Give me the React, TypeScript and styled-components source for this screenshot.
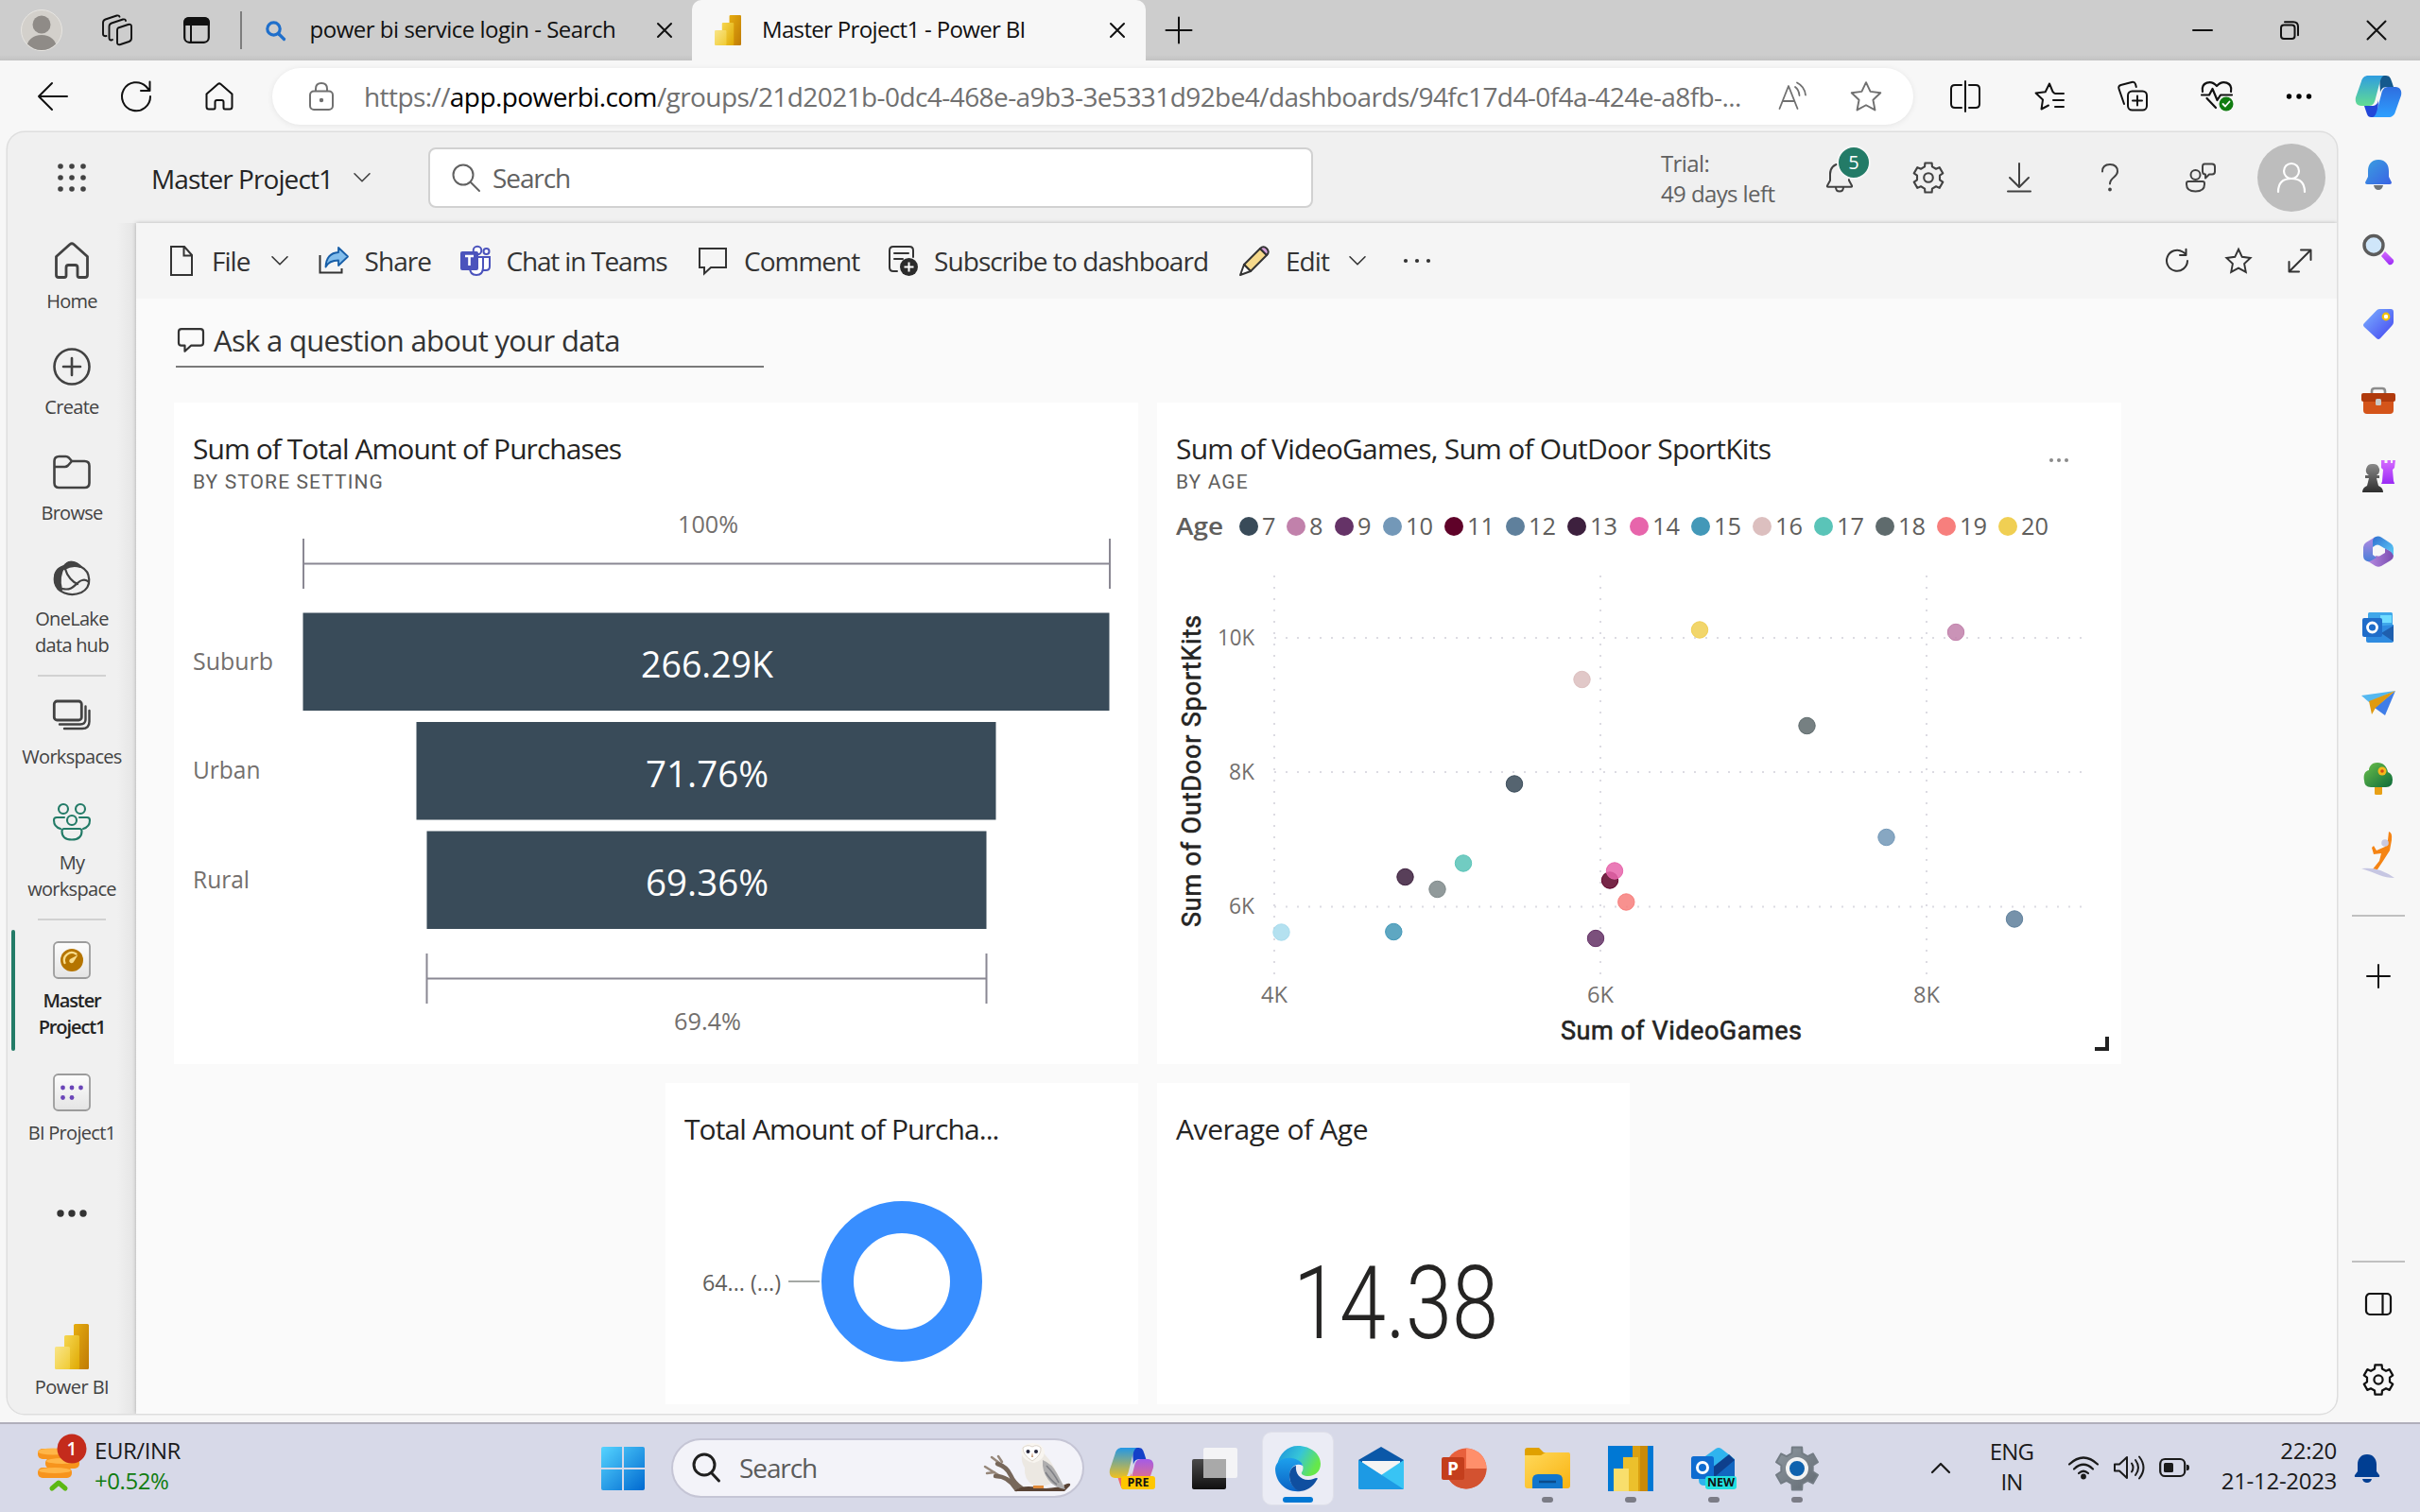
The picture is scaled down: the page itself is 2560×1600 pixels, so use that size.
import React from "react";
import styled, { createGlobalStyle, css } from "styled-components";

const UI = `"Open Sans", "Noto Sans", "Liberation Sans", sans-serif`;
const DIN = `Roboto, "Liberation Sans", sans-serif`;

const Global = createGlobalStyle`
  * { box-sizing: border-box; }
  html, body { margin: 0; padding: 0; background: #f7f7f7; }
  body { font-family: ${UI}; color: #242424; }
`;

/* ---------- shared pieces ---------- */

const Screen = styled.div`
  width: 2560px;
  height: 1600px;
  display: flex;
  flex-direction: column;
  overflow: hidden;
  background: #f7f7f7;
`;

const Svg = styled.svg<{ $w?: number; $h?: number; $ml?: number }>`
  display: block;
  flex: none;
  width: ${(p) => p.$w ?? 32}px;
  height: ${(p) => p.$h ?? p.$w ?? 32}px;
  margin-left: ${(p) => p.$ml ?? 0}px;
  overflow: visible;
`;

const Line = styled(Svg)<{ $sw?: number; $miter?: boolean }>`
  fill: none;
  stroke: currentColor;
  stroke-width: ${(p) => p.$sw ?? 2};
  stroke-linecap: ${(p) => (p.$miter ? "butt" : "round")};
  stroke-linejoin: ${(p) => (p.$miter ? "miter" : "round")};
`;

const Text = styled.span<{ $size: number; $ls?: number; $ml?: number; $w?: number }>`
  flex: none;
  white-space: nowrap;
  font-size: ${(p) => p.$size}px;
  letter-spacing: ${(p) => p.$ls ?? 0}px;
  margin-left: ${(p) => p.$ml ?? 0}px;
  ${(p) => p.$w !== undefined && css`width: ${p.$w}px;`}
`;

function gearPath(c: number, R: number, r: number) {
  const pts: string[] = [];
  for (let i = 0; i < 6; i++) {
    const a = -90 + i * 60;
    [[-19, r], [-13, R], [13, R], [19, r]].forEach(([d, q]) => {
      const t = ((a + d) * Math.PI) / 180;
      pts.push(`${(c + q * Math.cos(t)).toFixed(2)} ${(c + q * Math.sin(t)).toFixed(2)}`);
    });
  }
  return `M${pts.join("L")}Z`;
}

const STAR = "M16 2 L20.3 11.2 L30.4 12.5 L23 19.5 L24.9 29.6 L16 24.7 L7.1 29.6 L9 19.5 L1.6 12.5 L11.7 11.2Z";

const Chevron = () => (
  <Line $w={16} $h={10} $sw={1.6} viewBox="0 0 16 10"><path d="M0 .8l8 8 8-8" /></Line>
);

const PowerBars = ({ w, h, id }: { w: number; h: number; id: string }) => (
  <Svg $w={w} $h={h} viewBox="0 0 36 48" preserveAspectRatio="none">
    <defs>
      <linearGradient id={id + "a"} x1="0" y1="0" x2="1" y2="1"><stop offset="0" stopColor="#e6ad10" /><stop offset="1" stopColor="#bf7a05" /></linearGradient>
      <linearGradient id={id + "b"} x1="0" y1="0" x2="1" y2="1"><stop offset="0" stopColor="#f6d751" /><stop offset="1" stopColor="#dfa903" /></linearGradient>
      <linearGradient id={id + "c"} x1="0" y1="0" x2="1" y2="1"><stop offset="0" stopColor="#f9e589" /><stop offset="1" stopColor="#f0cb33" /></linearGradient>
    </defs>
    <rect x="20" y="0" width="16" height="48" rx="1.5" fill={`url(#${id}a)`} />
    <rect x="10" y="12" width="16" height="36" rx="1.5" fill={`url(#${id}b)`} />
    <rect x="0" y="24" width="16" height="24" rx="1.5" fill={`url(#${id}c)`} />
  </Svg>
);

const CopilotMark = ({ w, h, id, colors }: { w: number; h: number; id: string; colors: string[] }) => (
  <Svg $w={w} $h={h} viewBox="0 0 48 44" preserveAspectRatio="none">
    <defs>
      <linearGradient id={id + "a"} x1="0" y1="0" x2="0" y2="1"><stop offset="0" stopColor={colors[0]} /><stop offset="1" stopColor={colors[1]} /></linearGradient>
      <linearGradient id={id + "b"} x1="0" y1="0" x2="0" y2="1"><stop offset="0" stopColor={colors[2]} /><stop offset="1" stopColor={colors[3]} /></linearGradient>
    </defs>
    <path d="M25 0h7c4 0 5 3 6 6l2 6h-7c-4 0-6 2-7 6z" fill={colors[4]} />
    <path d="M23 44h-7c-3 0-4-3-5-6l-2-6h8c4 0 6-2 7-6z" fill={colors[5]} />
    <path d="M13 0h17c-3 1-4 5-5 9l-4 15c-1 5-3 8-7 8H6c-5 0-7-4-6-9L6 6c1-4 4-6 7-6z" fill={`url(#${id}a)`} />
    <path d="M35 44H18c3-1 4-5 5-9l4-15c1-5 3-8 7-8h8c5 0 7 4 6 9l-6 17c-1 4-4 6-7 6z" fill={`url(#${id}b)`} />
  </Svg>
);

/* ---------- browser title bar ---------- */

const TitleBar = styled.div`
  height: 64px;
  flex: none;
  display: flex;
  align-items: center;
  padding: 0 36px 0 22px;
  background: linear-gradient(#cdcdcd 58px, #c2c2c2);
  color: #111;
`;
const Profile = styled.div`
  width: 44px;
  height: 44px;
  border-radius: 50%;
  overflow: hidden;
  background: #d3d0cb;
  border: 1px solid #e8e6e2;
`;
const TabDivider = styled.div`
  width: 2px;
  height: 40px;
  margin: -1px 0 0 32px;
  background: #7d7d7d;
`;
const Tab = styled.div<{ $w: number; $active?: boolean }>`
  width: ${(p) => p.$w}px;
  height: 64px;
  display: flex;
  align-items: center;
  padding: 0 21px 0 25px;
  ${(p) => p.$active && css`
    background: #f7f7f7;
    border-radius: 10px 10px 0 0;
    padding: 0 22px 0 24px;
  `}
`;
const TabTitle = styled(Text)`
  padding-bottom: 3px;
`;
const Spacer = styled.div`flex: 1;`;
const WindowButtons = styled.div`
  display: flex;
  align-items: center;
  gap: 72px;
`;

const CloseX = () => <Line $w={16} viewBox="0 0 16 16"><path d="M1 1l14 14M15 1L1 15" /></Line>;

const TitleBarView = () => (
  <TitleBar>
    <Profile>
      <Svg $w={42} viewBox="0 0 42 42"><circle cx="21" cy="15" r="9.5" fill="#8f8b87" /><path d="M5 42c0-11 7-16 16-16s16 5 16 16z" fill="#8f8b87" /></Svg>
    </Profile>
    <Line $ml={42} $sw={1.9} viewBox="0 0 32 32">
      <path d="M17 13.500l10.500-3.500q3.500-1 3.500 2v12.500q0 2.500-2.500 3.500l-9 3q-3.500 1-3.500-2V16q0-1.800 1-2.500z" />
      <path d="M11 26l-.5.300q-3 .7-3-2V12q0-2.500 2.500-3.500l12-4q2.500-.7 3 1.500" />
      <path d="M4.500 22l-.5.200q-3 0-3-2V8q0-2.500 2.500-3.500l12-4q2.500-.6 3 1.200" />
    </Line>
    <Line $w={28} $ml={54} viewBox="0 0 28 28">
      <rect x="1.200" y="1.200" width="25.600" height="25.600" rx="5" strokeWidth="2.200" />
      <path d="M1 8V6q0-5 5-5h16q5 0 5 5v2z" fill="#111" /><path d="M8 9v17" />
    </Line>
    <TabDivider />
    <Tab $w={476}>
      <Svg $w={21} viewBox="0 0 21 21" fill="none" stroke="#1f6fcb" strokeWidth="3.200" strokeLinecap="round"><circle cx="8.500" cy="8.500" r="6.700" /><path d="M14 14l5.500 5.500" /></Svg>
      <TabTitle $size={24} $ls={-0.48} $ml={25.5}>power bi service login - Search</TabTitle>
      <Spacer />
      <CloseX />
    </Tab>
    <Tab $w={480} $active>
      <PowerBars w={28} h={32} id="tab" />
      <TabTitle $size={24} $ls={-0.66} $ml={22}>Master Project1 - Power BI</TabTitle>
      <Spacer />
      <CloseX />
    </Tab>
    <Line $w={28} $ml={21} viewBox="0 0 28 28"><path d="M14 .5v27M.5 14h27" /></Line>
    <Spacer />
    <WindowButtons>
      <Line $w={20} viewBox="0 0 20 20"><path d="M0 10h20" /></Line>
      <Line $w={20} viewBox="0 0 20 20"><rect x="1" y="4.500" width="14.500" height="14.500" rx="3" /><path d="M5 1.200h9q5 0 5 5v9" /></Line>
      <Line $w={20} viewBox="0 0 20 20"><path d="M.5.5l19 19M19.500.5l-19 19" /></Line>
    </WindowButtons>
  </TitleBar>
);

/* ---------- address row ---------- */

const AddressRow = styled.div`
  height: 76px;
  flex: none;
  display: flex;
  align-items: center;
  padding: 0 20px 0 40px;
  color: #111;
`;
const UrlPill = styled.div`
  width: 1736px;
  height: 60px;
  margin-left: 41px;
  padding: 0 33px 0 39px;
  display: flex;
  align-items: center;
  border-radius: 30px;
  background: #fff;
  color: #707070;
  box-shadow: 0 1px 6px rgba(0, 0, 0, 0.08);
`;
const Url = styled(Text)`
  padding-bottom: 1px;
`;
const Host = styled.b`
  font-weight: 400;
  color: #000;
`;

const AddressRowView = () => (
  <AddressRow>
    <Line viewBox="0 0 32 32"><path d="M1 16h30M15 2L1 16l14 14" /></Line>
    <Line $w={34} $ml={55} viewBox="0 0 34 34"><path d="M32 17A15 15 0 1 1 27.500 6.500l3.500 4M31.500 1.500v9.500h-9.500" /></Line>
    <Line $w={30} $ml={56} viewBox="0 0 30 30"><path d="M1.500 12.500L13.500 2q1.500-1.200 3 0l12 10.500V26q0 2.500-2.500 2.500h-5q-1.500 0-1.500-1.500v-6q0-2-2-2h-5q-2 0-2 2v6q0 1.500-1.500 1.500H4q-2.500 0-2.500-2.500z" /></Line>
    <UrlPill>
      <Line $w={26} $h={30} viewBox="0 0 26 30"><rect x="1" y="9.500" width="24" height="19.500" rx="4" /><path d="M7 9V7q0-6 6-6t6 6v2" /><circle cx="13" cy="19" r="1.200" fill="currentColor" /></Line>
      <Url $size={28} $ls={-0.58} $ml={32}>https://<Host>app.powerbi.com</Host>/groups/21d2021b-0dc4-468e-a9b3-3e5331d92be4/dashboards/94fc17d4-0f4a-424e-a8fb-...</Url>
      <Spacer />
      <Line $w={32} $sw={1.8} viewBox="0 0 32 32"><path d="M1.500 29L11 5l9.500 24M5 21h12M18 6q4 3 4.500 9M20 1.500q8 4 9 13" /></Line>
      <Line $w={34} $ml={44} $sw={1.8} viewBox="0 0 32 32"><path d={STAR} /></Line>
    </UrlPill>
    <Line $ml={39} viewBox="0 0 32 32"><path d="M16 0v32M12 4H5Q1 4 1 8v16q0 4 4 4h7M20 4h7q4 0 4 4v16q0 4-4 4h-7" /></Line>
    <Line $ml={57} viewBox="0 0 32 32"><path d="M21 12.500L19.500 11 16 2.500 11.700 11.200 1.600 12.500 9 19.500 7.500 29.500 15 25.500M22 13h9M20 20h11M22 27h9" /></Line>
    <Line $ml={56} viewBox="0 0 32 32"><rect x="11" y="10.500" width="20" height="20" rx="4.500" /><path d="M21 15.500v10M16 20.500h10M7 24L1.500 8q-1-3 2-4L15 1q3-.7 4 2l.8 3" /></Line>
    <Svg $w={34} $ml={56} viewBox="0 0 34 34" fill="none" stroke="#111" strokeWidth="2.200" strokeLinecap="round" strokeLinejoin="round">
      <path d="M2 12C0 2 11-1 17 6 23-1 34 2 32 12M6.500 19L16 29" /><path d="M1 15.500h8l3.500-6.500 5 12 3.500-5.500h12" />
      <circle cx="27" cy="25" r="7.500" fill="#107c10" stroke="none" /><path d="M23.500 25l2.500 2.500 4.500-5" stroke="#fff" strokeWidth="1.800" />
    </Svg>
    <Svg $w={28} $h={8} $ml={56} viewBox="0 0 28 8"><circle cx="3.500" cy="4" r="2.700" /><circle cx="14" cy="4" r="2.700" /><circle cx="24.500" cy="4" r="2.700" /></Svg>
    <Spacer />
    <CopilotMark w={48} h={44} id="edgecp" colors={["#2f9de0", "#62dc93", "#2e6ddf", "#2ea0ff", "#15598c", "#2247d8"]} />
  </AddressRow>
);

/* ---------- page frame ---------- */

const Body = styled.div`
  height: 1365px;
  flex: none;
  display: flex;
  align-items: flex-start;
  padding-left: 8px;
`;
const Frame = styled.div`
  width: 2464px;
  height: 1356px;
  flex: none;
  display: flex;
  flex-direction: column;
  overflow: hidden;
  border-radius: 18px;
  background: #f0f0f0;
  box-shadow: 0 0 0 1.500px #dedede;
`;
const PageHeader = styled.header`
  height: 96px;
  flex: none;
  display: flex;
  align-items: center;
  padding: 0 12px 0 56px;
  color: #424242;
`;
const WorkspaceName = styled(Text)`
  padding-top: 1px;
  color: #242424;
`;
const SearchBox = styled.div`
  width: 936px;
  height: 64px;
  margin-left: 62px;
  display: flex;
  align-items: center;
  padding-left: 23px;
  border: 2px solid #d1d1d1;
  border-radius: 8px;
  background: #fff;
  color: #616161;
`;
const Trial = styled.div`
  width: 174px;
  padding-top: 2px;
  font-size: 24px;
  line-height: 32px;
  letter-spacing: -0.6px;
  color: #616161;
`;
const BellWrap = styled.div`
  position: relative;
`;
const Badge = styled.div`
  position: absolute;
  left: 12px;
  top: -18px;
  width: 36px;
  height: 36px;
  border: 2px solid #f6f6f6;
  border-radius: 50%;
  background: #237b67;
  color: #fff;
  font-size: 20px;
  line-height: 32px;
  text-align: center;
`;
const UserCircle = styled.div`
  width: 72px;
  height: 72px;
  margin-left: 44px;
  border-radius: 50%;
  background: #bdbdbd;
  color: #fff;
  display: flex;
  align-items: center;
  justify-content: center;
`;

const HeaderView = () => (
  <PageHeader>
    <Svg $w={24} viewBox="0 0 24 24" fill="#424242">
      {[0, 12, 24].map((y) => [0, 12, 24].map((x) => <circle key={`${x}-${y}`} cx={x} cy={y} r="2.800" />))}
    </Svg>
    <WorkspaceName $size={28} $ls={-0.92} $ml={72} $w={215}>Master Project1</WorkspaceName>
    <Chevron />
    <SearchBox>
      <Line $w={30} viewBox="0 0 30 30"><circle cx="12" cy="12" r="10.500" /><path d="M20 20l9 9" /></Line>
      <Text $size={28} $ls={-1.1} $ml={13}>Search</Text>
    </SearchBox>
    <Spacer />
    <Trial>Trial:<br />49 days left</Trial>
    <BellWrap>
      <Line $w={30} $h={32} viewBox="0 0 30 32"><path d="M15 1.500C9 1.500 5 6 5 12v7l-3 5.500q-.5 1.200.8 1.200h24.400q1.300 0 .8-1.200L25 19v-7C25 6 21 1.500 15 1.500zM11 26q0 4.500 4 4.500t4-4.500" /></Line>
      <Badge>5</Badge>
    </BellWrap>
    <Line $w={34} $ml={62} viewBox="0 0 32 32"><path d={gearPath(16, 15, 11.5)} /><circle cx="16" cy="16" r="4.500" /></Line>
    <Line $w={24} $h={32} $ml={67} viewBox="0 0 24 32"><path d="M12 1v24M2 16l10 10 10-10M0 30.500h24" /></Line>
    <Line $w={18} $h={30} $ml={75} viewBox="0 0 18 30"><path d="M1 8.500Q1 1 9 1t8 7.500c0 6-8 6-8 13" /><circle cx="9" cy="27.500" r=".9" fill="currentColor" /></Line>
    <Line $ml={71} viewBox="0 0 32 32"><circle cx="10.500" cy="13" r="5" /><path d="M3 20h15q2 0 2 2v1q0 7.500-9.500 7.500T1 23v-1q0-2 2-2z" /><path d="M20 1.500h8q3 0 3 3v5q0 3-3 3h-3l-4 4v-4q-3 0-3-3v-5q0-3 2-3z" /></Line>
    <UserCircle><Line $w={32} $sw={2.2} viewBox="0 0 32 32"><circle cx="16" cy="9" r="8" /><path d="M2 31q0-14 14-14t14 14" /></Line></UserCircle>
  </PageHeader>
);

/* ---------- left navigation ---------- */

const Workspace = styled.div`
  flex: 1;
  display: flex;
  min-height: 0;
`;
const Nav = styled.nav`
  width: 136px;
  flex: none;
  display: flex;
  flex-direction: column;
  padding-bottom: 14px;
  background: linear-gradient(to right, #f0f0f0 116px, #e4e4e4);
`;
const NavItem = styled.div<{ $selected?: boolean }>`
  position: relative;
  display: flex;
  flex-direction: column;
  align-items: center;
  gap: 9px;
  padding: 20px 0 15px;
  color: #424242;
  text-align: center;
  font-size: 20px;
  line-height: 28px;
  letter-spacing: -0.7px;
  ${(p) => p.$selected && css`
    color: #242424;
    font-weight: 600;
    letter-spacing: -1.1px;
    &::before {
      content: "";
      position: absolute;
      left: 4px;
      top: 8px;
      width: 4px;
      height: 128px;
      border-radius: 2px;
      background: #237b67;
    }
  `}
`;
const IconBox = styled.div`
  width: 40px;
  height: 40px;
  display: flex;
  align-items: center;
  justify-content: center;
`;
const NavDivider = styled.div`
  width: 72px;
  height: 2px;
  margin: 2px auto;
  background: #d1d1d1;
`;
const More = styled.div`
  height: 112px;
  display: flex;
  align-items: center;
  justify-content: center;
`;
const BrandItem = styled.div`
  margin-top: auto;
  display: flex;
  flex-direction: column;
  align-items: center;
  gap: 5px;
  color: #424242;
  font-size: 20px;
  line-height: 28px;
  letter-spacing: -0.55px;
`;

const navIcons = {
  home: <Line $w={40} $sw={2.8} viewBox="0 0 40 40"><path d="M3.500 15.500L18 2.500q2-1.500 4 0l14.500 13V35q0 2.500-2.500 2.500h-6q-2 0-2-2V27q0-2.500-2.500-2.500h-7Q14 24.500 14 27v8.500q0 2-2 2H6Q3.500 37.500 3.500 35z" /></Line>,
  create: <Line $w={40} $sw={2.6} viewBox="0 0 40 40"><circle cx="20" cy="20" r="18.500" /><path d="M20 11v18M11 20h18" /></Line>,
  browse: <Line $w={40} $sw={2.6} viewBox="0 0 40 40"><path d="M1.500 8q0-5 5-5h7q2 0 3.500 1.500L20 8h13.500q5 0 5 5v18q0 5-5 5h-27q-5 0-5-5zM1.500 14h11q2 0 3.500-1.500L20 8" /></Line>,
  lake: <Line $w={40} $sw={2.2} viewBox="0 0 40 40"><path d="M12 7Q20-2 30 8c10 5 12 21 0 27-12 5-26 0-28-11-1-8 3-14 10-17z" /><path d="M12 7Q1 10 2 22q1 7 7 10-4-13 3-25zM12 7q6-9 17 1-8-3-17 2z" fill="currentColor" /><path d="M13 10c2 8 8 14 13 16M10 31c12 3 15-8 21-9 3-1 5 0 7 2" /></Line>,
  workspaces: <Line $w={40} $sw={2.4} viewBox="0 0 40 40"><rect x="1.300" y="4" width="29" height="20" rx="3" strokeWidth="2.800" /><path d="M7 28.500h22q5.500 0 5.500-5.500V9.500M12 33h19q7.500 0 7.500-7.500V14" /></Line>,
  mine: <Line $w={40} $sw={2.1} viewBox="0 0 40 40" color="#237b67"><circle cx="11" cy="6" r="5" /><circle cx="29" cy="6" r="5" /><circle cx="20" cy="18" r="5" /><path d="M12 15H4q-3 0-3 3 0 7 7 9M28 15h8q3 0 3 3 0 7-7 9M12 27h16q2.500 0 2.500 2.500 0 9-10.500 9T9.500 29.500Q9.500 27 12 27z" /></Line>,
  dash: <Svg $w={40} viewBox="0 0 40 40"><defs><linearGradient id="box" x1="0" y1="0" x2="0" y2="1"><stop offset="0" stopColor="#fdfdfd" /><stop offset="1" stopColor="#e4e4e4" /></linearGradient></defs><rect x="1" y="1" width="38" height="38" rx="4.500" fill="url(#box)" stroke="#9c9c9c" strokeWidth="1.800" /><circle cx="20" cy="20" r="12" fill="#b57500" /><path d="M12.500 23a8 8 0 0 1 12-9.500" fill="none" stroke="#f8dc8c" strokeWidth="2.200" strokeLinecap="round" /><path d="M26.500 14.500l-5 8q-2 1.500-3.500 0t0-3.500z" fill="#f8dc8c" /></Svg>,
  dots: <Svg $w={40} viewBox="0 0 40 40"><rect x="1" y="1" width="38" height="38" rx="4.500" fill="url(#box)" stroke="#9c9c9c" strokeWidth="1.800" /><g fill="#6b46b8"><circle cx="10.500" cy="15" r="2.400" /><circle cx="20" cy="15" r="2.400" /><circle cx="29.500" cy="15" r="2.400" /><circle cx="10.500" cy="25.500" r="2.400" /><circle cx="20" cy="25.500" r="2.400" /></g></Svg>,
};

const NavView = () => (
  <Nav>
    <NavItem><IconBox>{navIcons.home}</IconBox><span>Home</span></NavItem>
    <NavItem><IconBox>{navIcons.create}</IconBox><span>Create</span></NavItem>
    <NavItem><IconBox>{navIcons.browse}</IconBox><span>Browse</span></NavItem>
    <NavItem><IconBox>{navIcons.lake}</IconBox><span>OneLake<br />data hub</span></NavItem>
    <NavDivider />
    <NavItem><IconBox>{navIcons.workspaces}</IconBox><span>Workspaces</span></NavItem>
    <NavItem><IconBox>{navIcons.mine}</IconBox><span>My<br />workspace</span></NavItem>
    <NavDivider />
    <NavItem $selected><IconBox>{navIcons.dash}</IconBox><span>Master<br />Project1</span></NavItem>
    <NavItem><IconBox>{navIcons.dots}</IconBox><span>BI Project1</span></NavItem>
    <More><Svg $w={32} $h={8} viewBox="0 0 32 8" fill="#333"><circle cx="4" cy="4" r="3.700" /><circle cx="16" cy="4" r="3.700" /><circle cx="28" cy="4" r="3.700" /></Svg></More>
    <BrandItem><PowerBars w={36} h={48} id="brand" /><span>Power BI</span></BrandItem>
  </Nav>
);

/* ---------- dashboard toolbar ---------- */

const Main = styled.main`
  position: relative;
  flex: 1;
  min-width: 0;
  background: #fafafa;
  box-shadow: 0 0 4px rgba(0, 0, 0, 0.25);
`;
const Toolbar = styled.div`
  height: 80px;
  display: flex;
  align-items: center;
  gap: 33px;
  padding: 0 26px 0 32px;
  background: #f5f5f5;
  color: #333;
`;
const ToolItem = styled.div<{ $w: number; $ls?: number; $gap?: number }>`
  display: flex;
  align-items: center;
  gap: ${(p) => p.$gap ?? 17}px;
  font-size: 28px;
  white-space: nowrap;
  letter-spacing: ${(p) => p.$ls ?? -0.95}px;
  & > span { width: ${(p) => p.$w}px; }
`;
const MenuArrow = styled.div`margin-left: 5px;`;
const RightTools = styled.div`
  margin-left: auto;
  display: flex;
  align-items: center;
  gap: 38px;
`;

const ToolbarView = () => (
  <Toolbar>
    <ToolItem $w={42.5} $gap={16}>
      <Line $miter viewBox="0 0 32 32"><path d="M5 1h14l8 9v21H5zM18.500 1v9.500H27" /></Line>
      <span>File</span><MenuArrow><Chevron /></MenuArrow>
    </ToolItem>
    <ToolItem $w={68}>
      <Svg viewBox="0 0 32 32"><path d="M1.500 10v18.500h23V24" fill="none" stroke="#333" strokeWidth="2" /><path d="M21 2l10 9.500L21 21v-5.500c-7 0-11 2-13.500 7C8 13 13 7.500 21 7z" fill="#83beec" stroke="#185fa8" strokeWidth="1.800" strokeLinejoin="round" /></Svg>
      <span>Share</span>
    </ToolItem>
    <ToolItem $w={169.5} $ls={-1.17}>
      <Svg viewBox="0 0 32 32"><circle cx="18" cy="5" r="4.300" fill="#fff" stroke="#4b53bc" strokeWidth="2" /><circle cx="27.500" cy="6" r="3" fill="#fff" stroke="#4b53bc" strokeWidth="2" /><path d="M24 12h7v10q0 4-4 4h-3M10 12h14v11q0 8-7 8t-7-8z" fill="#fff" stroke="#4b53bc" strokeWidth="2" /><rect x="0" y="6" width="19" height="20" rx="2" fill="#4b53bc" /><path d="M5 11h9M9.500 11v10" stroke="#fff" strokeWidth="2.600" /></Svg>
      <span>Chat in Teams</span>
    </ToolItem>
    <ToolItem $w={119} $ls={-1}>
      <Line $miter viewBox="0 0 32 32"><path d="M2 3h28v20H14l-7 6.500V23H2z" /></Line>
      <span>Comment</span>
    </ToolItem>
    <ToolItem $w={290} $ls={-0.92}>
      <Svg viewBox="0 0 32 32" fill="none" stroke="#333" strokeWidth="2"><path d="M10 27H6q-4 0-4-4V5q0-4 4-4h17q4 0 4 4v7M7 8h15M7 14h9" strokeLinecap="round" /><circle cx="22.500" cy="22.500" r="9.500" fill="#2b2b2b" stroke="none" /><path d="M22.500 17.500v10M17.500 22.500h10" stroke="#fff" /></Svg>
      <span>Subscribe to dashboard</span>
    </ToolItem>
    <ToolItem $w={46}>
      <Svg viewBox="0 0 32 32" strokeLinejoin="round"><path d="M5 20L22 3l7 7-17 17z" fill="#f6d98b" stroke="#333" strokeWidth="2" /><path d="M22 3q3.500-3.500 7 0t0 7z" fill="#d6a0dc" stroke="#333" strokeWidth="2" /><path d="M5 20L1 31l11-4z" fill="#fff" stroke="#333" strokeWidth="2" /></Svg>
      <span>Edit</span><MenuArrow><Chevron /></MenuArrow>
    </ToolItem>
    <Svg $w={28} $h={4} $ml={8} viewBox="0 0 28 4" fill="#333"><circle cx="2" cy="2" r="2.100" /><circle cx="14" cy="2" r="2.100" /><circle cx="26" cy="2" r="2.100" /></Svg>
    <RightTools>
      <Line $w={26} viewBox="0 0 26 26"><path d="M24 13A11 11 0 1 1 19 3.500L22.500 6M22.500.8V7H16" /></Line>
      <Line $w={28} $sw={2.2} $miter viewBox="0 0 32 32"><path d={STAR} /></Line>
      <Line $w={26} viewBox="0 0 26 26"><path d="M2 24L24 2M14 1.500h10.500V12M1.500 14v10.500H12" /></Line>
    </RightTools>
  </Toolbar>
);

/* ---------- dashboard canvas ---------- */

const Question = styled.div`
  width: 622px;
  height: 73px;
  margin-left: 42px;
  padding: 17px 0 0 2px;
  display: flex;
  align-items: center;
  border-bottom: 2px solid #7a7a7a;
  color: #333;
`;
const Tiles = styled.div`
  display: grid;
  grid-template-columns: repeat(4, 500px);
  grid-template-rows: 700px 340px;
  gap: 20px;
  margin: 37px 0 0 40px;
`;
const Tile = styled.section<{ $col: string }>`
  position: relative;
  grid-column: ${(p) => p.$col};
  padding: 29px 20px 0;
  display: flex;
  flex-direction: column;
  background: #fff;
`;
const TileTitle = styled.div<{ $ls?: number }>`
  font-size: 30px;
  line-height: 40px;
  white-space: nowrap;
  letter-spacing: ${(p) => p.$ls ?? -0.94}px;
  color: #252423;
`;
const TileSub = styled.div`
  padding-top: 2px;
  font-family: ${DIN};
  font-size: 21px;
  line-height: 27px;
  letter-spacing: 1.1px;
  color: #605e5c;
`;
const TileMenu = styled.div`
  position: absolute;
  right: 55px;
  top: 59px;
`;
const Chart = styled.svg<{ $h: number }>`
  display: block;
  flex: none;
  width: 100%;
  height: ${(p) => p.$h}px;
  overflow: visible;
  font-family: ${UI};
`;

const bars = [
  { name: "Suburb", x: 320.5, w: 853, y: 648.5, label: "266.29K", lw: 137, nw: 85 },
  { name: "Urban", x: 440.5, w: 613, y: 764, label: "71.76%", lw: 127, nw: 71.5 },
  { name: "Rural", x: 451.5, w: 592, y: 879.5, label: "69.36%", lw: 127, nw: 60 },
];

const Funnel = () => (
  <Chart $h={602} viewBox="204 524 980 602">
    <g stroke="#8a8893" strokeWidth="2" fill="none">
      <path d="M321 570v53M1174 570v53M321 596.500h853" />
      <path d="M451.500 1009v53M1043.500 1009v53M451.500 1035.500h592" />
    </g>
    <g fill="#736f6d" fontSize="26">
      <text x="717" y="564" textLength="64" lengthAdjust="spacingAndGlyphs">100%</text>
      <text x="713" y="1090" textLength="71" lengthAdjust="spacingAndGlyphs">69.4%</text>
    </g>
    {bars.map((b) => (
      <g key={b.name}>
        <rect x={b.x} y={b.y} width={b.w} height={103.5} fill="#394b59" />
        <text x="748" y={b.y + 68.5} fontSize="39" fill="#fff" textAnchor="middle" textLength={b.lw + 3} lengthAdjust="spacingAndGlyphs">{b.label}</text>
        <text x="204" y={b.y + 60} fontSize="26" fill="#736f6d" textLength={b.nw} lengthAdjust="spacingAndGlyphs">{b.name}</text>
      </g>
    ))}
  </Chart>
);

const legend: [string, string, number][] = [
  ["7", "#394b59", 1321], ["8", "#c181ab", 1371], ["9", "#653367", 1422], ["10", "#7398b8", 1473], ["11", "#5f0229", 1538],
  ["12", "#5f809c", 1603], ["13", "#3d203e", 1668], ["14", "#e765ab", 1734], ["15", "#4398b8", 1799], ["16", "#dcbfbf", 1864],
  ["17", "#5ac4b8", 1929], ["18", "#5f6b6d", 1994], ["19", "#f77f7d", 2059], ["20", "#f0cf53", 2124],
];
const points: [number, number, string][] = [
  [1798, 666.5, "#f0cf53"], [2069, 669, "#c181ab"], [1673.5, 719, "#dcbfbf"], [1911.5, 768, "#5f6b6d"], [1602, 829.5, "#394b59"],
  [1995.5, 886, "#7398b8"], [1486.5, 928, "#3d203e"], [1548, 913.5, "#5ac4b8"], [1520.5, 941, "#7f898a"], [1703, 931.5, "#5f0229"],
  [1708, 921.5, "#e765ab"], [1720.3, 954.5, "#f77f7d"], [1474.3, 986, "#4398b8"], [1688, 993, "#653367"], [2131, 972.5, "#5f809c"], [1355.5, 986.5, "#a8dcee"],
];

const Scatter = () => (
  <Chart $h={602} viewBox="1244 524 980 602">
    <text x="1244" y="565.500" fontSize="26" fontWeight="600" fill="#605e5c" textLength="50" lengthAdjust="spacingAndGlyphs">Age</text>
    {legend.map(([n, c, x]) => (
      <g key={n}>
        <circle cx={x} cy="557" r="10" fill={c} />
        <text x={x + 14} y="565.500" fontSize="26" fill="#605e5c" textLength={n.length * 14.5} lengthAdjust="spacingAndGlyphs">{n}</text>
      </g>
    ))}
    <g stroke="#dcdbe2" strokeWidth="2" strokeDasharray="2 10" fill="none">
      <path d="M1348 609v424M1693 609v424M2038 609v424M1348 675h856M1348 817h856M1348 959.500h856" />
    </g>
    <g fill="#736f6d" fontSize="23">
      <text x="1288" y="683" textLength="39" lengthAdjust="spacingAndGlyphs">10K</text>
      <text x="1300" y="825" textLength="27" lengthAdjust="spacingAndGlyphs">8K</text>
      <text x="1300" y="967" textLength="27" lengthAdjust="spacingAndGlyphs">6K</text>
      <text x="1334" y="1061" textLength="28" lengthAdjust="spacingAndGlyphs">4K</text>
      <text x="1679" y="1061" textLength="28" lengthAdjust="spacingAndGlyphs">6K</text>
      <text x="2024" y="1061" textLength="28" lengthAdjust="spacingAndGlyphs">8K</text>
    </g>
    {points.map(([x, y, c]) => <circle key={`${x}`} cx={x} cy={y} r="8.700" fill={c} fillOpacity=".86" stroke={c} strokeWidth="1" />)}
    <g fontFamily={DIN} fontSize="27" fontWeight="400" fill="#252423" stroke="#252423" strokeWidth=".6">
      <text x="1651" y="1100" textLength="255" lengthAdjust="spacing">Sum of VideoGames</text>
      <text transform="translate(1270 981) rotate(-90)" x="0" y="0" textLength="330" lengthAdjust="spacing">Sum of OutDoor SportKits</text>
    </g>
    <path d="M2216 1110h13v-13" fill="none" stroke="#222" strokeWidth="4" />
  </Chart>
);

const CanvasView = () => (
  <Main>
    <ToolbarView />
    <Question>
      <Line $w={28} $h={26} $sw={2.2} viewBox="0 0 28 26"><path d="M4 1.200h20q3 0 3 3v11.500q0 3-3 3H14l-6.500 6v-6H4q-3 0-3-3V4.200q0-3 3-3z" /></Line>
      <Text $size={31} $ls={-0.68} $ml={10}>Ask a question about your data</Text>
    </Question>
    <Tiles>
      <Tile $col="1 / span 2">
        <TileTitle>Sum of Total Amount of Purchases</TileTitle>
        <TileSub>BY STORE SETTING</TileSub>
        <Funnel />
      </Tile>
      <Tile $col="3 / span 2">
        <TileTitle $ls={-0.75}>Sum of VideoGames, Sum of OutDoor SportKits</TileTitle>
        <TileSub>BY AGE</TileSub>
        <TileMenu><Svg $w={22} $h={4} viewBox="0 0 22 4" fill="#8a8a8a"><circle cx="3" cy="2" r="2" /><circle cx="11" cy="2" r="2" /><circle cx="19" cy="2" r="2" /></Svg></TileMenu>
        <Scatter />
      </Tile>
      <Tile $col="2">
        <TileTitle $ls={-0.9}>Total Amount of Purcha...</TileTitle>
        <Chart $h={270} viewBox="724 1215 460 270">
          <circle cx="954" cy="1356" r="68" fill="none" stroke="#388eff" strokeWidth="34" />
          <path d="M834 1356h33" stroke="#a5a8a5" strokeWidth="2" />
          <text x="743" y="1366" fontSize="23" fill="#605e5c" textLength="83" lengthAdjust="spacingAndGlyphs">64... (...)</text>
        </Chart>
      </Tile>
      <Tile $col="3">
        <TileTitle $ls={-0.4}>Average of Age</TileTitle>
        <Chart $h={270} viewBox="1244 1215 460 270">
          <text x="1368" y="1416" fontFamily={DIN} fontWeight="300" fontSize="108" fill="#252423" textLength="217" lengthAdjust="spacingAndGlyphs">14.38</text>
        </Chart>
      </Tile>
    </Tiles>
  </Main>
);

/* ---------- browser side rail ---------- */

const Rail = styled.aside`
  width: 88px;
  height: 1356px;
  display: flex;
  flex-direction: column;
  align-items: center;
  color: #111;
`;
const RailItem = styled.div<{ $h: number }>`
  width: 40px;
  height: ${(p) => p.$h}px;
  flex: none;
  display: flex;
  align-items: center;
  justify-content: center;
`;
const RailDivider = styled.div`
  width: 56px;
  height: 2px;
  flex: none;
  background: #c0c0c0;
`;

const RailView = () => (
  <Rail>
    <svg width="0" height="0">
      <defs>
        <linearGradient id="rb" x1="0" y1="0" x2="1" y2="1"><stop offset="0" stopColor="#3a9fe0" /><stop offset="1" stopColor="#3a62e4" /></linearGradient>
        <linearGradient id="rt" x1="0" y1="0" x2="1" y2="1"><stop offset="0" stopColor="#7db4ff" /><stop offset="1" stopColor="#4343f0" /></linearGradient>
        <linearGradient id="rp" x1="0" y1="0" x2="0" y2="1"><stop offset="0" stopColor="#d66bff" /><stop offset="1" stopColor="#9a2bf5" /></linearGradient>
        <linearGradient id="rg" x1="0" y1="0" x2="0" y2="1"><stop offset="0" stopColor="#8a8a8a" /><stop offset="1" stopColor="#2e2e2e" /></linearGradient>
        <linearGradient id="rtree" x1="0" y1="0" x2="1" y2="1"><stop offset="0" stopColor="#6cc04a" /><stop offset="1" stopColor="#0d6b3a" /></linearGradient>
        <linearGradient id="m1" x1="0" y1="0" x2="1" y2="1"><stop offset="0" stopColor="#2f6fd0" /><stop offset="1" stopColor="#5fd0fa" /></linearGradient>
        <linearGradient id="m2" x1="0" y1="0" x2="0" y2="1"><stop offset="0" stopColor="#b48ae2" /><stop offset="1" stopColor="#4a7fd8" /></linearGradient>
        <linearGradient id="m3" x1="0" y1="0" x2="1" y2="0"><stop offset="0" stopColor="#b58ae0" /><stop offset="1" stopColor="#7a4cb0" /></linearGradient>
      </defs>
    </svg>
    <RailItem $h={89}><Svg $w={34} viewBox="0 0 34 34"><path d="M12 28h10q-1 5-5 5t-5-5z" fill="#6f7479" /><path d="M17 1C9 1 6 7 6 13v6l-3 6q0 2 2 2h24q2 0 2-2l-3-6v-6C28 7 25 1 17 1z" fill="url(#rb)" /></Svg></RailItem>
    <RailItem $h={69}><Svg $w={34} viewBox="0 0 34 34"><path d="M20 24l4-5 9 9q1 2-1 4t-4 1z" fill="url(#rp)" /><circle cx="12" cy="12.500" r="10" fill="#cfe6fa" stroke="#5c5c5c" strokeWidth="3.400" /></Svg></RailItem>
    <RailItem $h={90}><Svg $w={34} viewBox="0 0 34 34"><path d="M18 1h12q3 0 3 3v11q0 2-2 4L19 32q-2 2-4 0L2 20q-2-2 0-4L15 2.500Q16 1 18 1z" fill="url(#rt)" /><circle cx="25" cy="9" r="3.300" fill="#fff" stroke="#f2c200" strokeWidth="2.200" /></Svg></RailItem>
    <RailItem $h={72}><Svg $w={36} $h={30} viewBox="0 0 36 30"><path d="M11 9V5q0-3 3-3h8q3 0 3 3v4" fill="none" stroke="#8c8c8c" strokeWidth="2.600" /><path d="M2 14h32v11q0 4-4 4H6q-4 0-4-4z" fill="#d4541a" /><rect x="0" y="7" width="36" height="9" rx="2" fill="#b03a0c" /><rect x="15" y="13" width="6" height="7" rx="1.500" fill="#c9c9c9" /></Svg></RailItem>
    <RailItem $h={87}><Svg $w={36} viewBox="0 0 36 36"><path d="M21 1h3.500v3h3V1H31v3h2V1h3l-1 8-2 2 1 12q1 2 1 3H21q1-2 1-3l1-12-2-2z" fill="url(#rp)" /><path d="M12 5a6.500 6.500 0 0 1 4 12h3v3h-3l2 8q5 2 5 7H1q0-5 5-7l2-8H4v-3h4a6.500 6.500 0 0 1 4-12z" fill="url(#rg)" /></Svg></RailItem>
    <RailItem $h={73}><Svg $w={34} viewBox="0 0 34 34">
      <path d="M9 24l6-3q2 1 4 0l5-3v-5l7 4q2 2 2 4 0 3-3 5l-10 6q-3 1.500-6 0L6 27z" fill="url(#m3)" />
      <path d="M13 1.500L4 7q-3 2-3 5v9q0 4 3 5.500t6-.5l5-3-4-3v-9q0-3 2-4.500z" fill="url(#m2)" />
      <path d="M13 1.500q4-2 7 0L30 8q3 2 3 5v8q-1-3-4-5l-6-3-5-3q-2-1-4 0l-3 2V5q0-2 2-3.500z" fill="url(#m1)" />
    </Svg></RailItem>
    <RailItem $h={88}><Svg $w={34} viewBox="0 0 34 34"><rect x="6" y="1" width="26" height="20" rx="1.500" fill="#3fa7ea" /><rect x="19" y="4" width="12" height="8" fill="#6fdcff" /><path d="M4 17l29-3v17q0 2-2 2H6q-2 0-2-2z" fill="#2f8be0" /><path d="M33 15L20 23l13 9z" fill="#1f5fae" /><rect x="0" y="7" width="21" height="20" rx="2" fill="#1f6cc9" /><circle cx="10.500" cy="17" r="5" fill="none" stroke="#fff" strokeWidth="2.800" /></Svg></RailItem>
    <RailItem $h={72}><Svg $w={36} $h={28} viewBox="0 0 36 28"><path d="M0 6L36 1 8 13z" fill="#55b8f0" /><path d="M36 1L25 27l-11-8z" fill="#3f7de8" /><path d="M36 1L8 12l3 14 4-7z" fill="#e09a10" /></Svg></RailItem>
    <RailItem $h={88}><Svg $w={32} $h={34} viewBox="0 0 32 34"><rect x="12" y="23" width="8" height="11" rx="1.500" fill="#e8a016" /><path d="M15 0C8 0 6 5 6 8 1 9 0 14 1 19q0 7 7 7h16q7 0 7-8 0-6-5-8C25 4 21 0 15 0z" fill="url(#rtree)" /><circle cx="20" cy="9" r="4.500" fill="#f5b81c" /><circle cx="20" cy="9" r="1.800" fill="#d34c12" /></Svg></RailItem>
    <RailItem $h={72}><Svg $w={36} $h={50} viewBox="0 0 36 50"><path d="M29 1q4 1 3 9l-2 11-7 11-6 9q-3 2-6 1l8-10 2-8-8 1-2-7 2-2 3 5 9-4 3-7z" fill="#f58414" /><circle cx="25" cy="13" r="3.800" fill="#c9c9e0" /><path d="M0 40q12-1 20 2t15 8q-9 0-16-3T0 40z" fill="#c6c6e2" /></Svg></RailItem>
    <RailItem $h={28} />
    <RailDivider />
    <RailItem $h={126}><Line $w={24} viewBox="0 0 24 24"><path d="M12 0v24M0 12h24" /></Line></RailItem>
    <Spacer />
    <RailDivider />
    <RailItem $h={88}><Line $w={28} $h={24} $sw={2.2} viewBox="0 0 28 24"><rect x="1" y="1" width="26" height="22" rx="4" /><path d="M18.500 1v22" /></Line></RailItem>
    <RailItem $h={72}><Line $w={34} $sw={2.1} viewBox="0 0 32 32"><path d={gearPath(16, 15, 11.5)} /><circle cx="16" cy="16" r="4.300" /></Line></RailItem>
  </Rail>
);

/* ---------- taskbar ---------- */

const Taskbar = styled.footer`
  height: 95px;
  flex: none;
  display: flex;
  align-items: center;
  border-top: 2px solid #b0afbb;
  background: #d7d9e8;
  color: #1a1a1a;
`;
const Widget = styled.div`
  width: 636px;
  display: flex;
  align-items: center;
  padding-left: 38px;
`;
const WidgetText = styled.div`
  margin-left: 6px;
  padding-bottom: 5px;
  font-size: 24px;
  line-height: 32px;
  letter-spacing: -0.45px;
`;
const Gain = styled.div`color: #107c10;`;
const TaskSearch = styled.div`
  width: 437px;
  height: 63px;
  margin: -1px 6px 0 28px;
  padding: 0 12px 0 20px;
  display: flex;
  align-items: center;
  border: 2px solid #c5c5d5;
  border-radius: 32px;
  background: #f3f3f9;
  color: #5b5b5b;
`;
const TaskCell = styled.div`
  position: relative;
  width: 88px;
  height: 93px;
  display: flex;
  align-items: center;
  justify-content: center;
`;
const ActivePlate = styled.div`
  width: 76px;
  height: 78px;
  display: flex;
  align-items: center;
  justify-content: center;
  border-radius: 10px;
  border: 1px solid #dfe0ea;
  background: #ebecf5;
`;
const RunMark = styled.div<{ $active?: boolean }>`
  position: absolute;
  left: 50%;
  bottom: 10px;
  width: ${(p) => (p.$active ? 32 : 12)}px;
  height: 6px;
  transform: translateX(-50%);
  border-radius: 3px;
  background: ${(p) => (p.$active ? "#0078d4" : "#7b7c86")};
`;
const Tag = styled.div<{ $bg: string; $left: number; $w: number }>`
  position: absolute;
  left: ${(p) => p.$left}px;
  top: 55px;
  width: ${(p) => p.$w}px;
  height: 14px;
  border-radius: 3px;
  background: ${(p) => p.$bg};
  color: #111;
  font-size: 12.500px;
  font-weight: 700;
  line-height: 14px;
  text-align: center;
`;
const Tray = styled.div`
  margin-left: auto;
  padding-right: 40px;
  display: flex;
  align-items: center;
`;
const Lang = styled.div`
  width: 60px;
  margin: 0 30px 0 35px;
  padding-bottom: 3px;
  text-align: center;
  font-size: 24px;
  line-height: 32px;
  letter-spacing: -0.8px;
`;
const TrayIcons = styled.div`
  display: flex;
  align-items: center;
  gap: 16px;
  padding-bottom: 2px;
`;
const Clock = styled.div`
  width: 156px;
  margin-right: 16px;
  padding-bottom: 5px;
  text-align: right;
  font-size: 24px;
  line-height: 32px;
  letter-spacing: -0.3px;
`;

const Owl = () => (
  <Svg $w={92} $h={52} viewBox="0 0 92 52">
    <path d="M1 25l16 10M8 15l12 9M15 14l4 6M11 31l-8 1" fill="none" stroke="#96877a" strokeWidth="2.500" strokeLinecap="round" />
    <path d="M14 22q10 3 14 12t12 14M12 35q14 0 22 14" fill="none" stroke="#77675a" strokeWidth="4.500" strokeLinecap="round" />
    <path d="M32 51q8-7 24-4t32-4q4-1 3 2l-6 6z" fill="#5a4436" />
    <path d="M40 12q3-6 12-6t13 7q4 4 8 11l12 22q-8 0-12-4-12 6-22 2-9-6-8-18-4-6-3-14z" fill="#ece8e2" />
    <path d="M62 18q10 4 15 14l9 17q-12-2-18-10-7-9-6-21z" fill="#aeadae" />
    <path d="M66 24q8 8 13 18M65 31q5 8 12 13" stroke="#7f8086" strokeWidth="1.600" fill="none" />
    <path d="M51 0q12 0 13 10-1 8-11 11-12-2-14-11Q40 0 51 0z" fill="#f8f5f0" />
    <path d="M51 4q5-3 9 1 1 8-9 14-10-6-10-14 5-4 10-1z" fill="#fff" stroke="#d8cfc4" strokeWidth=".9" />
    <circle cx="46.500" cy="9" r="2" fill="#26263a" /><circle cx="55" cy="9" r="2" fill="#26263a" /><path d="M51 10l-1.200 5h2.400z" fill="#c9a284" />
    <path d="M52 45h11v3H52z" fill="#e08a3a" />
  </Svg>
);

const TaskbarView = () => (
  <Taskbar>
    <svg width="0" height="0">
      <defs>
        <linearGradient id="win" gradientUnits="userSpaceOnUse" x1="0" y1="0" x2="46" y2="46"><stop offset="0" stopColor="#55d4ff" /><stop offset="1" stopColor="#0069d0" /></linearGradient>
        <linearGradient id="eg" x1="0" y1="0" x2="1" y2=".4"><stop offset="0" stopColor="#1b8fdc" /><stop offset=".55" stopColor="#36c5d8" /><stop offset="1" stopColor="#66e84a" /></linearGradient>
        <linearGradient id="ed" x1="0" y1="0" x2="0" y2="1"><stop offset="0" stopColor="#1da0ec" /><stop offset="1" stopColor="#0b62c4" /></linearGradient>
        <linearGradient id="fold" x1="0" y1="0" x2="1" y2="1"><stop offset="0" stopColor="#ffd95a" /><stop offset="1" stopColor="#f9b312" /></linearGradient>
        <linearGradient id="gw" x1="0" y1="0" x2="1" y2="1"><stop offset="0" stopColor="#8e98a0" /><stop offset="1" stopColor="#626a72" /></linearGradient>
        <linearGradient id="dk" x1="0" y1="0" x2="0" y2="1"><stop offset="0" stopColor="#4a4a4a" /><stop offset="1" stopColor="#101010" /></linearGradient>
      </defs>
    </svg>
    <Widget>
      <Svg $w={56} $h={60} viewBox="0 0 56 60">
        <g fill="#f7941d"><rect x="2" y="9" width="32" height="11" rx="5" /><rect x="10" y="19" width="36" height="11" rx="5" /><rect x="2" y="29" width="36" height="11" rx="5" /></g>
        <g fill="#ffb648"><ellipse cx="18" cy="12" rx="16" ry="3.500" /><ellipse cx="28" cy="22" rx="17" ry="3" /><ellipse cx="20" cy="32" rx="17" ry="3" /></g>
        <path d="M17 51l7-6 7 6" fill="none" stroke="#5cb813" strokeWidth="5" strokeLinecap="round" strokeLinejoin="round" />
        <circle cx="38" cy="9" r="15.500" fill="#c42b1c" />
        <text x="38" y="16" fill="#fff" fontSize="19" fontWeight="600" textAnchor="middle">1</text>
      </Svg>
      <WidgetText>EUR/INR<Gain>+0.52%</Gain></WidgetText>
    </Widget>
    <Svg $w={46} viewBox="0 0 46 46"><g fill="url(#win)"><path d="M2 0h20v22H0V2q0-2 2-2z" /><path d="M24 0h20q2 0 2 2v20H24z" /><path d="M0 24h22v22H2q-2 0-2-2z" /><path d="M24 24h22v20q0 2-2 2H24z" /></g></Svg>
    <TaskSearch>
      <Line $w={30} $sw={3} viewBox="0 0 30 30" color="#1f1f1f"><circle cx="13" cy="12" r="11" /><path d="M20.500 20.500l8 8.500" /></Line>
      <Text $size={28} $ls={-1.1} $ml={20}>Search</Text>
      <Spacer />
      <Owl />
    </TaskSearch>
    <TaskCell>
      <CopilotMark w={46} h={44} id="taskcp" colors={["#2397e6", "#f0c020", "#a35be8", "#ff7a5c", "#1440c8", "#f06a70"]} />
      <Tag $bg="#ffc700" $left={33} $w={36}>PRE</Tag>
    </TaskCell>
    <TaskCell>
      <Svg $w={48} $h={44} viewBox="0 0 48 44"><rect x="0" y="12" width="36" height="32" rx="2" fill="url(#dk)" /><rect x="12" y="0" width="36" height="32" rx="2" fill="#f4f4f6" /><rect x="12" y="12" width="24" height="20" fill="#a9a9a9" /></Svg>
    </TaskCell>
    <TaskCell>
      <ActivePlate>
        <Svg $w={48} viewBox="0 0 48 48">
          <path d="M2 21C4 8 13 0 24 0c14 0 24 9 24 19 0 8-6 13-13 13-5 0-8-2-7-4 3-4 2-11-6-12C12 15 3 18 2 21z" fill="url(#eg)" />
          <path d="M0 24C1 16 9 12 17 13c9 1 12 6 12 8-7-4-14 2-14 11 0 7 5 14 12 16C12 50 0 39 0 24z" fill="url(#ed)" />
          <path d="M15 31c0-5 3-9 7-10-1 8 4 15 13 15 4 0 7-2 9-2 1 0 1 1 0 2-4 8-12 12-18 12-7-2-11-9-11-17z" fill="#0f4fa0" />
        </Svg>
      </ActivePlate>
      <RunMark $active />
    </TaskCell>
    <TaskCell>
      <Svg $w={48} $h={46} viewBox="0 0 48 46"><path d="M0 14L24 0l24 14v8H0z" fill="#0b58a8" /><path d="M4 15h40v22H4z" fill="#f4f4f4" /><path d="M0 14l24 16 24-16v30q0 1-2 1H2q-2 0-2-1z" fill="#38c4f4" /><path d="M0 14l48 31H2q-2 0-2-2z" fill="#1d9ae4" /></Svg>
    </TaskCell>
    <TaskCell>
      <Svg $w={48} $h={44} viewBox="0 0 48 44"><circle cx="26" cy="22" r="21.500" fill="#e8603c" /><path d="M26 .5A21.500 21.500 0 0 1 47.500 22H26z" fill="#ff8f6b" /><path d="M47.500 22A21.500 21.500 0 0 1 26 43.500Q14 43 8 34L26 22z" fill="#d35230" /><rect x="0" y="10" width="24" height="24" rx="2" fill="#c43e1c" /><text x="12" y="29" fill="#fff" fontSize="19" fontWeight="700" textAnchor="middle">P</text></Svg>
    </TaskCell>
    <TaskCell>
      <Svg $w={48} $h={44} viewBox="0 0 48 44"><path d="M0 3q0-3 3-3h12l5 5h25q2 0 2 2v8H0z" fill="#e0a100" /><path d="M0 8h17l5-3h24q2 0 2 2v33q0 3-3 3H3q-3 0-3-3z" fill="url(#fold)" /><path d="M8 43v-9q0-6 6-6h20q6 0 6 6v9z" fill="#1276cc" /><path d="M15 36h18" stroke="#0b4c8c" strokeWidth="2.500" /></Svg>
      <RunMark />
    </TaskCell>
    <TaskCell>
      <Svg $w={48} viewBox="0 0 48 48"><rect width="48" height="48" fill="#0078d4" /><path d="M26 0h16v48H26z" fill="#dba010" /><path d="M34 0h8v48h-8z" fill="#c98a08" /><path d="M16 12h16v36H16z" fill="#ecc02c" /><path d="M6 24h16v24H6z" fill="#f8de6c" /></Svg>
      <RunMark />
    </TaskCell>
    <TaskCell>
      <Svg $w={48} $h={44} viewBox="0 0 48 44"><path d="M8 14L26 1q3-2 6 0l14 11v22q0 6-6 6H14q-6 0-6-6z" fill="#2fb4ee" /><path d="M18 34L46 12v22q0 6-6 6H18z" fill="#1266c0" /><path d="M16 26L40 7l6 6-26 22z" fill="#0e3f8c" /><rect x="0" y="9" width="24" height="24" rx="2.500" fill="#0f6cd0" /><circle cx="12" cy="21" r="5.500" fill="none" stroke="#fff" strokeWidth="3" /></Svg>
      <Tag $bg="#22e0e0" $left={35} $w={33}>NEW</Tag>
      <RunMark />
    </TaskCell>
    <TaskCell>
      <Svg $w={48} viewBox="0 0 48 48"><path d={gearPath(24, 23, 17)} fill="url(#gw)" stroke="#737c84" strokeWidth="2" strokeLinejoin="round" /><circle cx="24" cy="24" r="10" fill="#0f62ae" stroke="#f3f3f3" strokeWidth="4" /></Svg>
      <RunMark />
    </TaskCell>
    <Tray>
      <Line $w={20} $h={11} $sw={2.2} viewBox="0 0 20 11"><path d="M1 10l9-9 9 9" /></Line>
      <Lang>ENG<br />IN</Lang>
      <TrayIcons>
        <Line $w={32} $h={24} $sw={2.2} viewBox="0 0 32 24"><path d="M1 8.500q15-14 30 0M6 13.500q10-9.500 20 0M11 18q5-4.500 10 0" /><circle cx="16" cy="21.500" r="1.800" fill="currentColor" /></Line>
        <Line $w={32} $h={26} viewBox="0 0 32 26"><path d="M1 9.500h5L14 2v22l-8-7.500H1zM19 8.500q3 4.500 0 9M23 5q6 8 0 16M27 1.500q9 11.500 0 23" /></Line>
        <Svg $w={32} $h={22} viewBox="0 0 32 22"><rect x="1.200" y="2" width="26" height="18" rx="5" fill="none" stroke="#1a1a1a" strokeWidth="2.200" /><rect x="5" y="6" width="10" height="10" rx="1.500" fill="#1a1a1a" /><path d="M29 8h1q2 0 2 3t-2 3h-1z" fill="#1a1a1a" /></Svg>
      </TrayIcons>
      <Clock>22:20<br />21-12-2023</Clock>
      <Svg $w={32} viewBox="0 0 32 32" fill="#003e92"><path d="M16 1C9.500 1 6 6 6 11.500V19l-3 4q-.8 2 1.200 2h23.600q2 0 1.200-2l-3-4v-7.500C26 6 22.500 1 16 1zM11 27h10q-1 4-5 4t-5-4z" /></Svg>
    </Tray>
  </Taskbar>
);

export default function App() {
  return (
    <Screen>
      <Global />
      <TitleBarView />
      <AddressRowView />
      <Body>
        <Frame>
          <HeaderView />
          <Workspace>
            <NavView />
            <CanvasView />
          </Workspace>
        </Frame>
        <RailView />
      </Body>
      <TaskbarView />
    </Screen>
  );
}
